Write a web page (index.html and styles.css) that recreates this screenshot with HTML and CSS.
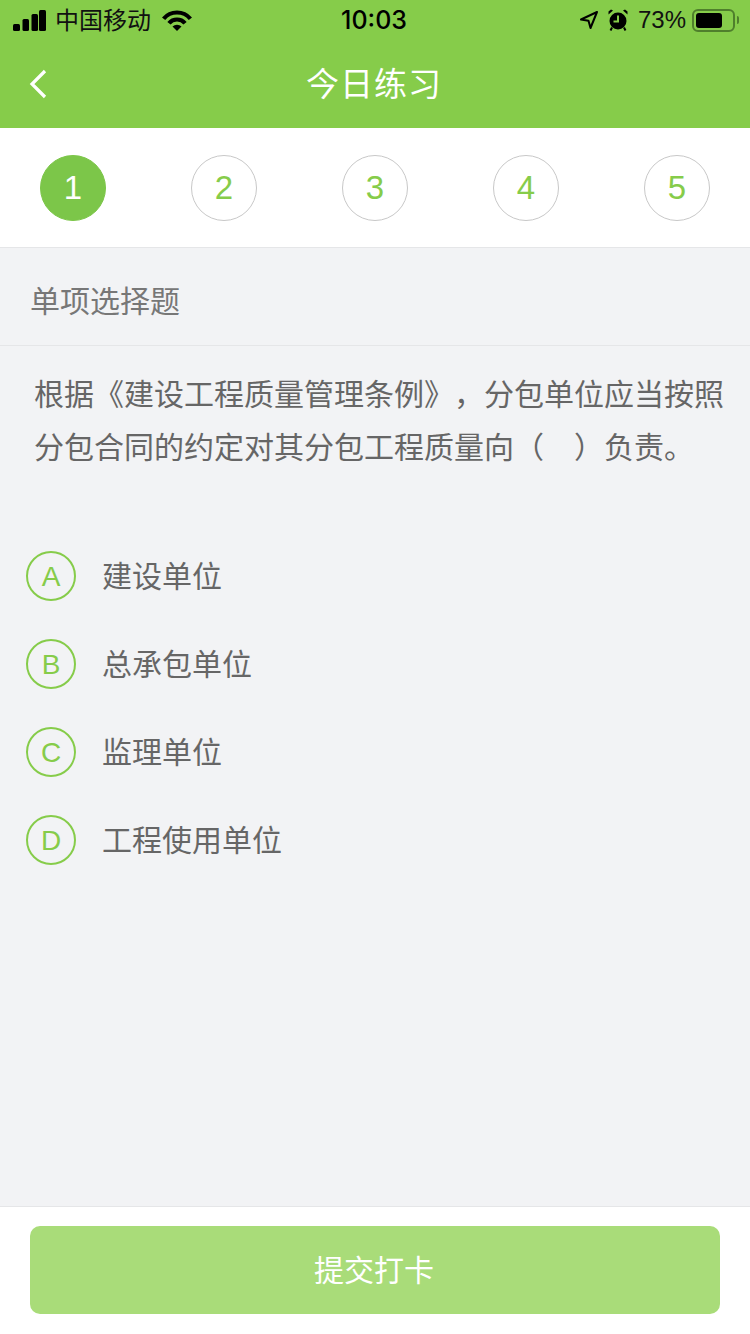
FILE: index.html
```html
<!DOCTYPE html>
<html lang="zh-CN">
<head>
  <meta charset="UTF-8">
  <meta name="viewport" content="width=device-width, initial-scale=1.0">
  <title>今日练习</title>
  <link rel="stylesheet" href="styles.css">
</head>
<body>
<div class="page">
  <header class="header">
    <div class="status">
      <div class="status-side">
        <svg class="signal" width="33" height="21" viewBox="0 0 33 21"><rect x="0" y="14" width="7" height="7" rx="1.500"/><rect x="9.500" y="9" width="6.500" height="12" rx="1.500"/><rect x="18.500" y="4" width="6.500" height="17" rx="1.500"/><rect x="26" y="0" width="7" height="21" rx="1.500"/></svg>
        <span class="carrier">中国移动</span>
        <svg class="wifi" width="30" height="22" viewBox="0 0 30 22"><path d="M1.600 9.750A17.500 17.500 0 0 1 28.400 9.750" fill="none" stroke="#000" stroke-width="4.200"/><path d="M6.960 14.250A10.500 10.500 0 0 1 23.040 14.250" fill="none" stroke="#000" stroke-width="4.200"/><path d="M15 22 10.500 17.500A6.400 6.400 0 0 1 19.500 17.500z"/></svg>
      </div>
      <div class="time">10:03</div>
      <div class="status-side status-right">
        <svg class="arrow" width="20" height="20" viewBox="0 0 20 20"><path d="M18 2 2 9.500l7.500 1.200L11.500 18z" fill="none" stroke="#000" stroke-width="2" stroke-linejoin="round"/></svg>
        <svg class="alarm" width="20" height="22" viewBox="0 0 20 22"><circle cx="10" cy="12" r="8.500"/><path d="M0.500 5.500 5 1.500 3 .5.500 2.500zM19.500 5.500 15 1.500 17 .5 19.500 2.500z"/><path d="M4 18.500 2.500 21.500M16 18.500 17.500 21.500" stroke="#000" stroke-width="2"/><path d="M10 6.500v6H5.500" fill="none" stroke="#86cc4a" stroke-width="2"/></svg>
        <span class="percent">73%</span>
        <div class="battery"><div class="battery-level"></div></div>
        <div class="battery-cap"></div>
      </div>
    </div>
    <div class="nav">
      <svg class="back" width="20" height="32" viewBox="0 0 20 32"><path d="M17 3 4 16l13 13" fill="none" stroke="#fff" stroke-width="3.200"/></svg>
      <h1 class="title">今日练习</h1>
    </div>
  </header>

  <div class="steps">
    <div class="step step-active">1</div>
    <div class="step">2</div>
    <div class="step">3</div>
    <div class="step">4</div>
    <div class="step">5</div>
  </div>

  <main class="main">
    <div class="type">单项选择题</div>
    <p class="question">根据《建设工程质量管理条例》，分包单位应当按照分包合同的约定对其分包工程质量向（　）负责。</p>
    <ul class="options">
      <li class="option"><span class="letter">A</span><span class="option-text">建设单位</span></li>
      <li class="option"><span class="letter">B</span><span class="option-text">总承包单位</span></li>
      <li class="option"><span class="letter">C</span><span class="option-text">监理单位</span></li>
      <li class="option"><span class="letter">D</span><span class="option-text">工程使用单位</span></li>
    </ul>
  </main>

  <footer class="footer">
    <button class="submit" type="button">提交打卡</button>
  </footer>
</div>
</body>
</html>
```

FILE: styles.css
```css
* {
  box-sizing: border-box;
}
body {
  margin: 0;
  font-family: "Liberation Sans", "Noto Sans CJK SC", sans-serif;
  background-color: #f2f3f5;
  color: #666;
  text-spacing-trim: space-all;
}
.page {
  display: flex;
  flex-direction: column;
  height: 1334px;
}
.header {
  background: #86cc4a;
  height: 128px;
}
.status {
  display: flex;
  align-items: center;
  justify-content: space-between;
  height: 40px;
  padding: 0 11px 0 13px;
  color: #000;
}
.status-side {
  display: flex;
  align-items: center;
  width: 280px;
}
.status-right {
  justify-content: flex-end;
}
.signal {
  margin-right: 9px;
}
.carrier {
  margin-bottom: 3px;
  font-size: 24px;
  color: #111;
}
.wifi {
  margin-left: 11px;
}
.time {
  margin-right: 4px;
  font-family: Inter, "Liberation Sans", sans-serif;
  font-size: 25px;
  font-weight: 500;
}
.arrow {
  margin-right: 9px;
}
.alarm {
  margin-right: 10px;
}
.percent {
  font-size: 24px;
  color: #111;
}
.battery {
  width: 43px;
  height: 23px;
  margin-left: 6px;
  padding: 2px;
  border: 2px solid #4f7f2c;
  border-radius: 6px;
}
.battery-level {
  width: 75%;
  height: 100%;
  background: #000;
  border-radius: 3px;
}
.battery-cap {
  width: 2px;
  height: 8px;
  margin-left: 2px;
  background: #4f7f2c;
  border-radius: 0 2px 2px 0;
}
.nav {
  position: relative;
  display: flex;
  align-items: center;
  justify-content: center;
  height: 88px;
}
.back {
  position: absolute;
  left: 28px;
  top: 28px;
}
.title {
  margin: 0 0 4px;
  font-size: 33px;
  font-weight: 400;
  color: #fff;
  letter-spacing: 1px;
  padding-right: 2px;
}
.steps {
  display: flex;
  align-items: center;
  justify-content: space-between;
  height: 120px;
  padding: 1px 40px 0;
  background: #fff;
  border-bottom: 1px solid #e5e6e8;
}
.step {
  display: flex;
  align-items: center;
  justify-content: center;
  width: 66px;
  height: 66px;
  border: 1px solid #c8c8c8;
  border-radius: 50%;
  font-size: 33px;
  color: #86cc4a;
}
.step-active {
  background: #7cc649;
  border-color: #7cc649;
  color: #fff;
}
.main {
  flex: 1;
}
.type {
  height: 98px;
  padding: 33px 0 0 30px;
  font-size: 30px;
  line-height: 42px;
  color: #777;
  border-bottom: 1px solid #e5e6e8;
}
.question {
  margin: 0;
  padding: 22px 25px 0 34px;
  font-size: 30px;
  line-height: 53px;
}
.options {
  list-style: none;
  margin: 0;
  padding: 58px 0 0 26px;
}
.option {
  display: flex;
  align-items: center;
  gap: 26px;
  height: 88px;
  font-size: 30px;
}
.option-text {
  margin-bottom: 5px;
}
.letter {
  display: flex;
  align-items: center;
  justify-content: center;
  width: 50px;
  height: 50px;
  padding-top: 2px;
  border: 2px solid #86cc4a;
  border-radius: 50%;
  font-size: 28px;
  color: #86cc4a;
}
.footer {
  height: 128px;
  padding: 19px 30px 0;
  background: #fff;
  border-top: 1px solid #e5e6e8;
}
.submit {
  display: block;
  width: 100%;
  height: 88px;
  padding: 0 2px 4px 0;
  background: #a9dc79;
  color: #fff;
  border: none;
  border-radius: 10px;
  font-family: inherit;
  font-size: 30px;
}
```
